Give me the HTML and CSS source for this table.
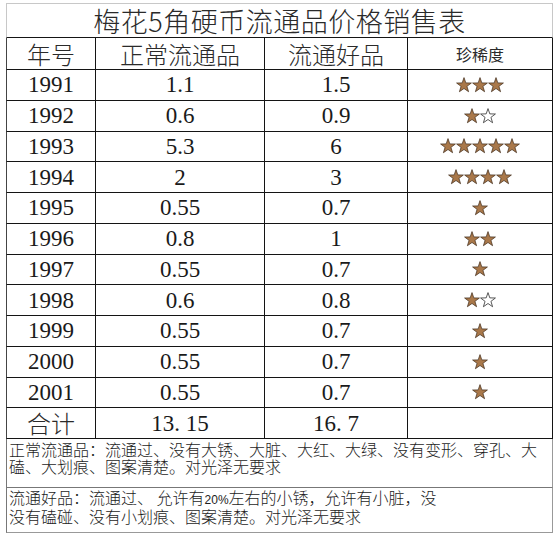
FILE: index.html
```html
<!DOCTYPE html>
<html lang="zh-CN">
<head>
<meta charset="utf-8">
<title>梅花5角硬币流通品价格销售表</title>
<link rel="stylesheet" href="styles.css">
</head>
<body>
<svg class="defs" width="0" height="0" aria-hidden="true">
  <defs>
    <polygon id="st" points="8,0.6 9.82,5.89 15.42,5.99 10.95,9.36 12.58,14.71 8,11.5 3.42,14.71 5.05,9.36 0.58,5.99 6.18,5.89"/>
  </defs>
</svg>
<div class="sheet">
  <div class="title">梅花5角硬币流通品价格销售表</div>
  <div class="grid">
    <div class="hd">年号</div><div class="hd">正常流通品</div><div class="hd">流通好品</div><div class="hd small">珍稀度</div>

    <div class="num">1991</div><div class="num">1.1</div><div class="num">1.5</div>
    <div class="stars"><svg class="full" viewBox="0 0 16 16"><use href="#st"/></svg><svg class="full" viewBox="0 0 16 16"><use href="#st"/></svg><svg class="full" viewBox="0 0 16 16"><use href="#st"/></svg></div>

    <div class="num">1992</div><div class="num">0.6</div><div class="num">0.9</div>
    <div class="stars"><svg class="full" viewBox="0 0 16 16"><use href="#st"/></svg><svg class="empty" viewBox="0 0 16 16"><use href="#st"/></svg></div>

    <div class="num">1993</div><div class="num">5.3</div><div class="num">6</div>
    <div class="stars"><svg class="full" viewBox="0 0 16 16"><use href="#st"/></svg><svg class="full" viewBox="0 0 16 16"><use href="#st"/></svg><svg class="full" viewBox="0 0 16 16"><use href="#st"/></svg><svg class="full" viewBox="0 0 16 16"><use href="#st"/></svg><svg class="full" viewBox="0 0 16 16"><use href="#st"/></svg></div>

    <div class="num">1994</div><div class="num">2</div><div class="num">3</div>
    <div class="stars"><svg class="full" viewBox="0 0 16 16"><use href="#st"/></svg><svg class="full" viewBox="0 0 16 16"><use href="#st"/></svg><svg class="full" viewBox="0 0 16 16"><use href="#st"/></svg><svg class="full" viewBox="0 0 16 16"><use href="#st"/></svg></div>

    <div class="num">1995</div><div class="num">0.55</div><div class="num">0.7</div>
    <div class="stars"><svg class="full" viewBox="0 0 16 16"><use href="#st"/></svg></div>

    <div class="num">1996</div><div class="num">0.8</div><div class="num">1</div>
    <div class="stars"><svg class="full" viewBox="0 0 16 16"><use href="#st"/></svg><svg class="full" viewBox="0 0 16 16"><use href="#st"/></svg></div>

    <div class="num">1997</div><div class="num">0.55</div><div class="num">0.7</div>
    <div class="stars"><svg class="full" viewBox="0 0 16 16"><use href="#st"/></svg></div>

    <div class="num">1998</div><div class="num">0.6</div><div class="num">0.8</div>
    <div class="stars"><svg class="full" viewBox="0 0 16 16"><use href="#st"/></svg><svg class="empty" viewBox="0 0 16 16"><use href="#st"/></svg></div>

    <div class="num">1999</div><div class="num">0.55</div><div class="num">0.7</div>
    <div class="stars"><svg class="full" viewBox="0 0 16 16"><use href="#st"/></svg></div>

    <div class="num">2000</div><div class="num">0.55</div><div class="num">0.7</div>
    <div class="stars"><svg class="full" viewBox="0 0 16 16"><use href="#st"/></svg></div>

    <div class="num">2001</div><div class="num">0.55</div><div class="num">0.7</div>
    <div class="stars"><svg class="full" viewBox="0 0 16 16"><use href="#st"/></svg></div>

    <div class="hd">合计</div><div class="num">13. 15</div><div class="num">16. 7</div><div class="stars"></div>
  </div>
  <div class="note note1">正常流通品：流通过、没有大锈、大脏、大红、大绿、没有变形、穿孔、大<br>磕、大划痕、图案清楚。对光泽无要求</div>
  <div class="note note2">流通好品：流通过、 允许有<span class="half">20%</span>左右的小锈，允许有小脏，没<br>没有磕碰、没有小划痕、图案清楚。对光泽无要求</div>
</div>
</body>
</html>
```

FILE: styles.css
```css
html, body {
  margin: 0;
  padding: 0;
  background: #ffffff;
}

.defs {
  position: absolute;
  width: 0;
  height: 0;
  overflow: hidden;
}

.sheet {
  width: 547px;
  margin: 3px 0 0 6px;
  font-family: "Noto Sans CJK SC", "Noto Sans CJK JP", sans-serif;
  color: #1d1d1d;
}

.title {
  box-sizing: border-box;
  height: 35px;
  border: 1px solid #c8c8c8;
  border-bottom-color: #151515;
  display: flex;
  align-items: center;
  justify-content: center;
  font-size: 27px;
  font-weight: 300;
  line-height: 1;
  letter-spacing: 0.5px;
  color: #2a2a2a;
}

.grid {
  display: grid;
  grid-template-columns: 90px 169px 143px 145px;
  grid-template-rows: 32px repeat(12, 30.75px);
}

.grid > div {
  box-sizing: border-box;
  border-right: 1px solid #141414;
  border-bottom: 1px solid #141414;
  display: flex;
  align-items: center;
  justify-content: center;
}

.grid > div:nth-child(4n+1) {
  border-left: 1px solid #444444;
}

.hd {
  font-size: 24px;
  font-weight: 300;
  line-height: 1;
  color: #2a2a2a;
}

.hd.small {
  font-size: 16px;
  font-weight: 400;
}

.num {
  font-family: "Liberation Serif", "Times New Roman", serif;
  font-size: 23px;
  line-height: 1;
  color: #1a1a1a;
}

.stars svg {
  display: block;
  width: 16px;
  height: 16px;
}

.stars .full use {
  fill: #a9784a;
  stroke: #3e2a18;
  stroke-width: 0.7;
}

.stars .empty use {
  fill: #ffffff;
  stroke: #2e2e2e;
  stroke-width: 0.8;
}

.note {
  box-sizing: border-box;
  border-left: 1px solid #777777;
  border-right: 1px solid #999999;
  border-bottom: 1px solid #777777;
  padding-left: 2px;
  font-size: 16px;
  font-weight: 300;
  color: #1d1d1d;
  white-space: nowrap;
}

.note1 {
  height: 49px;
  padding-top: 2px;
  line-height: 17px;
}

.note2 {
  height: 45px;
  padding-top: 1px;
  line-height: 16px;
  border-bottom-color: #999999;
}

.half {
  font-family: "Liberation Sans", sans-serif;
  font-size: 12px;
}
```
